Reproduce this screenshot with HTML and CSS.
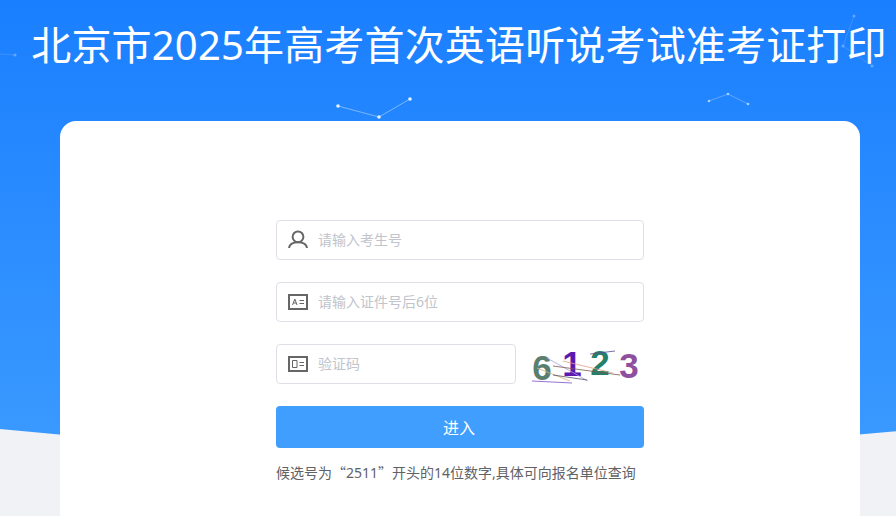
FILE: index.html

```html
<!DOCTYPE html>
<html lang="en">
<head>
  <meta charset="UTF-8" />
  <title>北京市2025年高考首次英语听说考试准考证打印</title>
  <meta name="viewport" content="width=device-width, initial-scale=1.0" />
  <link rel="stylesheet" href="styles.css">
</head>
<body>
  <div class="page">
    <!-- background dots and the grey curve at the bottom -->
    <svg class="backdrop" width="920" height="516" viewBox="0 0 920 516">
      <path class="curve" d="M0 429 Q460 475 920 429 V516 H0 Z" />
      <g class="net">
        <path d="M338 106 L379 117 L410 99" />
        <circle cx="338" cy="106" r="1.8" />
        <circle cx="379" cy="117" r="1.8" />
        <circle cx="410" cy="99" r="1.8" />
      </g>
      <g class="net net-dim">
        <path d="M709 101 L728 94 L748 104" />
        <circle cx="709" cy="101" r="1.3" />
        <circle cx="728" cy="94" r="1.3" />
        <circle cx="748" cy="104" r="1.3" />
      </g>
      <g class="net net-faint">
        <path d="M854 16 L843 46 L872 66" />
        <circle cx="854" cy="16" r="1.5" />
        <circle cx="843" cy="46" r="1.5" />
        <circle cx="872" cy="66" r="1.5" />
        <path d="M0 54 L15 55" />
        <circle cx="15" cy="55" r="1.5" />
      </g>
    </svg>

    <h1 class="title">北京市2025年高考首次英语听说考试准考证打印</h1>

    <div class="card">
      <form class="login">
        <div class="field">
          <svg class="icon" width="20" height="20" viewBox="0 0 20 20">
            <circle cx="10" cy="6.8" r="5.4" />
            <path d="M1 18 C1.5 14 5 12.2 10 12.2 S18.5 14 19 18" />
          </svg>
          <input type="text" placeholder="请输入考生号" />
        </div>
        <div class="field">
          <svg class="icon" width="20" height="20" viewBox="0 0 20 20">
            <rect x="1" y="3" width="18" height="14" />
            <path class="thin" d="M4.5 13 L6.8 7 L9 13 M5.3 11 H8.3 M11.5 8.5 H16 M11.5 11.5 H16" />
          </svg>
          <input type="text" placeholder="请输入证件号后6位" />
        </div>
        <div class="code-row">
          <div class="field code-field">
            <svg class="icon" width="20" height="20" viewBox="0 0 20 20">
              <rect x="1" y="3" width="18" height="14" />
              <path class="thin" d="M4.5 6.5 H9 V13.5 H4.5 Z M11.5 8.5 H16 M11.5 11.5 H16" />
            </svg>
            <input type="text" placeholder="验证码" />
          </div>
          <svg class="captcha" width="116" height="48" viewBox="0 -4 116 48">
            <text x="14" y="36" fill="#5a7f70">6</text>
            <text x="44" y="32" fill="#5a1ab0">1</text>
            <text x="72" y="31" fill="#25806a">2</text>
            <text x="101" y="34" fill="#8f4f9f">3</text>
            <path stroke="#7a4fc8" d="M4 37 L44 39" />
            <path stroke="#a99ae0" d="M19 14 L60 37" />
            <path stroke="#7a5a50" d="M25 22 L92 31" />
            <path stroke="#5a4a90" d="M62 10 L87 7" />
            <path stroke="#e0b070" d="M9 24 L42 37" />
            <path stroke="#e0a080" d="M35 17 L85 29" />
            <path stroke="#50506a" d="M25 31 L59 36" />
          </svg>
        </div>
        <button class="submit" type="button">进入</button>
        <p class="hint">候选号为<span class="quote">“</span>2511<span class="quote">”</span>开头的14位数字,具体可向报名单位查询</p>
      </form>
    </div>
  </div>
</body>
</html>
```

FILE: styles.css

```css
html, body {
  margin: 0;
  padding: 0;
  height: 516px;
  overflow: hidden;
}
body {
  font-family: "Noto Sans", "Noto Sans CJK SC", sans-serif;
  color: #606266;
}
.page {
  position: relative;
  width: 920px;
  height: 516px;
  overflow: hidden;
  background: linear-gradient(180deg, #1a7fff 0%, #409eff 100%);
}
.backdrop {
  position: absolute;
  left: 0;
  top: 0;
}
.curve {
  fill: #f1f2f6;
}
.net path {
  fill: none;
  stroke: rgba(255,255,255,0.4);
  stroke-width: 1;
}
.net circle {
  fill: #e6f1ff;
}
.net-dim {
  opacity: 0.7;
}
.net-faint {
  opacity: 0.35;
}
.title {
  position: relative;
  margin: 0;
  height: 121px;
  padding: 15px 2px 0 0;
  box-sizing: border-box;
  font-size: 40px;
  line-height: 60px;
  font-weight: 400;
  letter-spacing: 0.17px;
  color: #fff;
  text-align: center;
  white-space: nowrap;
}
.card {
  position: relative;
  width: 800px;
  height: 500px;
  margin: 0 auto;
  padding-top: 99px;
  box-sizing: border-box;
  background: #fff;
  border-radius: 16px;
}
.login {
  display: flex;
  flex-direction: column;
  gap: 22px;
  width: 368px;
  margin: 0 auto;
}
.field {
  display: flex;
  align-items: center;
  gap: 10px;
  height: 40px;
  padding-left: 11px;
  box-sizing: border-box;
  border: 1px solid #dcdfe6;
  border-radius: 4px;
  background: #fff;
}
.field input {
  flex: 1;
  min-width: 0;
  border: 0;
  outline: 0;
  padding: 0 0 2px;
  font-family: inherit;
  font-size: 14px;
  color: #606266;
  background: transparent;
}
.field input::placeholder {
  color: #c0c4cc;
  opacity: 1;
}
.icon {
  flex: none;
  fill: none;
  stroke: #666;
  stroke-width: 2;
}
.icon .thin {
  stroke-width: 1;
}
.code-row {
  display: flex;
  align-items: center;
  gap: 12px;
  height: 40px;
}
.code-field {
  width: 240px;
  flex: none;
}
.captcha {
  flex: none;
}
.captcha text {
  font-family: "Liberation Sans", sans-serif;
  font-size: 35px;
  font-weight: 700;
  text-anchor: middle;
}
.captcha path {
  fill: none;
  stroke-width: 0.8;
}
.submit {
  height: 42px;
  padding: 0 2px 0 0;
  border: 0;
  border-radius: 4px;
  background: #409eff;
  color: #fff;
  font-family: inherit;
  font-size: 16px;
  cursor: pointer;
}
.hint {
  margin: -8px 0 0;
  font-size: 14px;
  line-height: 20px;
  white-space: nowrap;
}
.quote {
  font-family: "Noto Sans CJK SC", sans-serif;
}
```
